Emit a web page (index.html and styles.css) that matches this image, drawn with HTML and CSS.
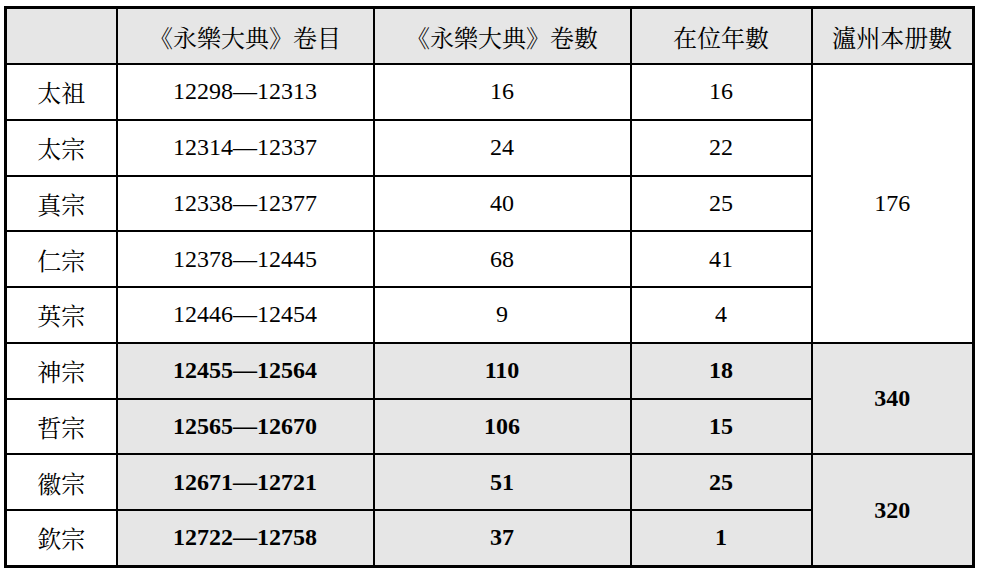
FILE: index.html
```html
<!DOCTYPE html>
<html lang="zh-Hant">
<head>
<meta charset="utf-8">
<title>永樂大典 卷目</title>
<link rel="stylesheet" href="styles.css">
</head>
<body>
<table class="tbl">
  <colgroup>
    <col class="c1"><col class="c2"><col class="c3"><col class="c4"><col class="c5">
  </colgroup>
  <thead>
    <tr class="head">
      <th></th>
      <th>《永樂大典》卷目</th>
      <th>《永樂大典》卷數</th>
      <th>在位年數</th>
      <th>瀘州本册數</th>
    </tr>
  </thead>
  <tbody>
    <tr><td class="name">太祖</td><td>12298—12313</td><td>16</td><td>16</td><td rowspan="5">176</td></tr>
    <tr><td class="name">太宗</td><td>12314—12337</td><td>24</td><td>22</td></tr>
    <tr><td class="name">真宗</td><td>12338—12377</td><td>40</td><td>25</td></tr>
    <tr><td class="name">仁宗</td><td>12378—12445</td><td>68</td><td>41</td></tr>
    <tr><td class="name">英宗</td><td>12446—12454</td><td>9</td><td>4</td></tr>
    <tr class="grey"><td class="name">神宗</td><td>12455—12564</td><td>110</td><td>18</td><td rowspan="2">340</td></tr>
    <tr class="grey"><td class="name">哲宗</td><td>12565—12670</td><td>106</td><td>15</td></tr>
    <tr class="grey"><td class="name">徽宗</td><td>12671—12721</td><td>51</td><td>25</td><td rowspan="2">320</td></tr>
    <tr class="grey"><td class="name">欽宗</td><td>12722—12758</td><td>37</td><td>1</td></tr>
  </tbody>
</table>
</body>
</html>
```
FILE: styles.css
```css
html, body {
  margin: 0;
  padding: 0;
  background: #ffffff;
}
body {
  padding: 6px 0 0 4px;
}
.tbl {
  border-collapse: collapse;
  table-layout: fixed;
  width: 968px;
  border: 3px solid #000;
  font-family: "Liberation Serif", "Noto Serif CJK TC", "Noto Sans CJK TC", serif;
  font-size: 24px;
  color: #000;
}
.c1 { width: 111px; }
.c2 { width: 257px; }
.c3 { width: 257px; }
.c4 { width: 181px; }
.c5 { width: 162px; }
.tbl th, .tbl td {
  border: 2px solid #000;
  text-align: center;
  vertical-align: middle;
  padding: 0;
}
.tbl th {
  font-weight: normal;
  font-size: 24px;
  background: #e6e6e6;
  height: 54px;
}
.tbl td {
  height: 53.75px;
}
.tbl td.name {
  font-size: 24px;
  font-weight: normal;
  background: #ffffff;
}
.grey td {
  background: #e6e6e6;
  font-weight: bold;
}
```
